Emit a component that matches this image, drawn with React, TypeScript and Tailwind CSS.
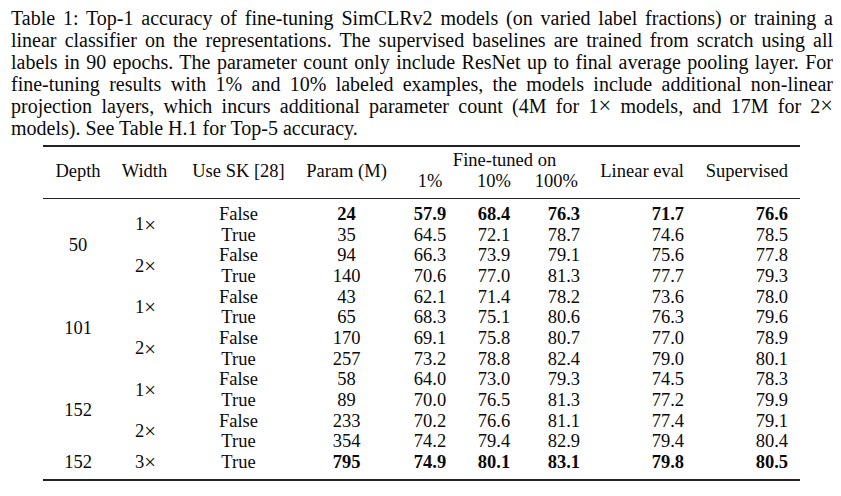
import React from 'react';

type Row = {
  depth?: string;
  depthSpan?: number;
  width?: string;
  widthSpan?: number;
  sk: string;
  param: string;
  ft1: string;
  ft10: string;
  ft100: string;
  linear: string;
  sup: string;
  bold?: boolean;
};

const rows: Row[] = [
  { depth: '50', depthSpan: 4, width: '1', widthSpan: 2, sk: 'False', param: '24', ft1: '57.9', ft10: '68.4', ft100: '76.3', linear: '71.7', sup: '76.6', bold: true },
  { sk: 'True', param: '35', ft1: '64.5', ft10: '72.1', ft100: '78.7', linear: '74.6', sup: '78.5' },
  { width: '2', widthSpan: 2, sk: 'False', param: '94', ft1: '66.3', ft10: '73.9', ft100: '79.1', linear: '75.6', sup: '77.8' },
  { sk: 'True', param: '140', ft1: '70.6', ft10: '77.0', ft100: '81.3', linear: '77.7', sup: '79.3' },
  { depth: '101', depthSpan: 4, width: '1', widthSpan: 2, sk: 'False', param: '43', ft1: '62.1', ft10: '71.4', ft100: '78.2', linear: '73.6', sup: '78.0' },
  { sk: 'True', param: '65', ft1: '68.3', ft10: '75.1', ft100: '80.6', linear: '76.3', sup: '79.6' },
  { width: '2', widthSpan: 2, sk: 'False', param: '170', ft1: '69.1', ft10: '75.8', ft100: '80.7', linear: '77.0', sup: '78.9' },
  { sk: 'True', param: '257', ft1: '73.2', ft10: '78.8', ft100: '82.4', linear: '79.0', sup: '80.1' },
  { depth: '152', depthSpan: 4, width: '1', widthSpan: 2, sk: 'False', param: '58', ft1: '64.0', ft10: '73.0', ft100: '79.3', linear: '74.5', sup: '78.3' },
  { sk: 'True', param: '89', ft1: '70.0', ft10: '76.5', ft100: '81.3', linear: '77.2', sup: '79.9' },
  { width: '2', widthSpan: 2, sk: 'False', param: '233', ft1: '70.2', ft10: '76.6', ft100: '81.1', linear: '77.4', sup: '79.1' },
  { sk: 'True', param: '354', ft1: '74.2', ft10: '79.4', ft100: '82.9', linear: '79.4', sup: '80.4' },
  { depth: '152', depthSpan: 1, width: '3', widthSpan: 1, sk: 'True', param: '795', ft1: '74.9', ft10: '80.1', ft100: '83.1', linear: '79.8', sup: '80.5', bold: true },
];

const captionLines = [
  'Table 1: Top-1 accuracy of fine-tuning SimCLRv2 models (on varied label fractions) or training a',
  'linear classifier on the representations. The supervised baselines are trained from scratch using all',
  'labels in 90 epochs. The parameter count only include ResNet up to final average pooling layer. For',
  'fine-tuning results with 1% and 10% labeled examples, the models include additional non-linear',
];

const cols = 'grid-cols-[70px_63px_125px_91px_76px_52px_74px_102px_104px]';

function Times() {
  return <span className="text-[1.12em] leading-[0]">×</span>;
}

export default function App() {
  return (
    <div className="w-[841px] h-[496px] bg-white text-[#0a0a0a] font-['Liberation_Serif',serif] overflow-hidden">
      {/* Caption */}
      <div className="pt-[7px] pl-[11px] w-[833px] text-[20px] leading-[22px]">
        {captionLines.map((line) => (
          <span key={line} className="block whitespace-nowrap text-justify [text-align-last:justify]">
            {line}
          </span>
        ))}
        <span className="block whitespace-nowrap text-justify [text-align-last:justify]">
          projection layers, which incurs additional parameter count (4M for 1<Times /> models, and 17M for 2<Times />
        </span>
        <span className="block">models). See Table H.1 for Top-5 accuracy.</span>
      </div>

      {/* Table */}
      <div className="ml-[43px] w-[757px] mt-[6px] text-[18.5px] border-t-2 border-b-2 border-[#222]">
        {/* Header */}
        <div className={`grid ${cols} grid-rows-[21px_21px] pt-[3px] pb-[6px] leading-[21px] border-b border-[#222]`}>
          <div className="row-span-2 flex items-center justify-center">Depth</div>
          <div className="row-span-2 flex items-center justify-center">Width</div>
          <div className="row-span-2 flex items-center justify-center">Use SK [28]</div>
          <div className="row-span-2 flex items-center justify-center">Param (M)</div>
          <div className="col-span-3 text-center pl-[23px]">Fine-tuned on</div>
          <div className="row-span-2 flex items-center justify-end pr-[12px]">Linear eval</div>
          <div className="row-span-2 flex items-center justify-end pr-[12px]">Supervised</div>
          <div className="text-center">1%</div>
          <div className="text-center">10%</div>
          <div className="text-right pr-[16px]">100%</div>
        </div>

        {/* Body */}
        <div className={`grid ${cols} grid-rows-[repeat(13,20.67px)] pt-[5px] pb-[6px] leading-[20.67px]`}>
          {rows.map((r, i) => {
            const num = r.bold ? 'font-bold' : '';
            return (
              <React.Fragment key={i}>
                {r.depth && (
                  <div className={`flex items-center justify-center ${r.depthSpan === 4 ? 'row-span-4' : ''}`}>
                    {r.depth}
                  </div>
                )}
                {r.width && (
                  <div className={`flex items-center justify-center pl-[2px] ${r.widthSpan === 2 ? 'row-span-2' : ''}`}>
                    {r.width}
                    <Times />
                  </div>
                )}
                <div className="text-center">{r.sk}</div>
                <div className={`text-center ${num}`}>{r.param}</div>
                <div className={`text-center ${num}`}>{r.ft1}</div>
                <div className={`text-center ${num}`}>{r.ft10}</div>
                <div className={`text-right pr-[14px] ${num}`}>{r.ft100}</div>
                <div className={`text-right pr-[12px] ${num}`}>{r.linear}</div>
                <div className={`text-right pr-[12px] ${num}`}>{r.sup}</div>
              </React.Fragment>
            );
          })}
        </div>
      </div>
    </div>
  );
}
